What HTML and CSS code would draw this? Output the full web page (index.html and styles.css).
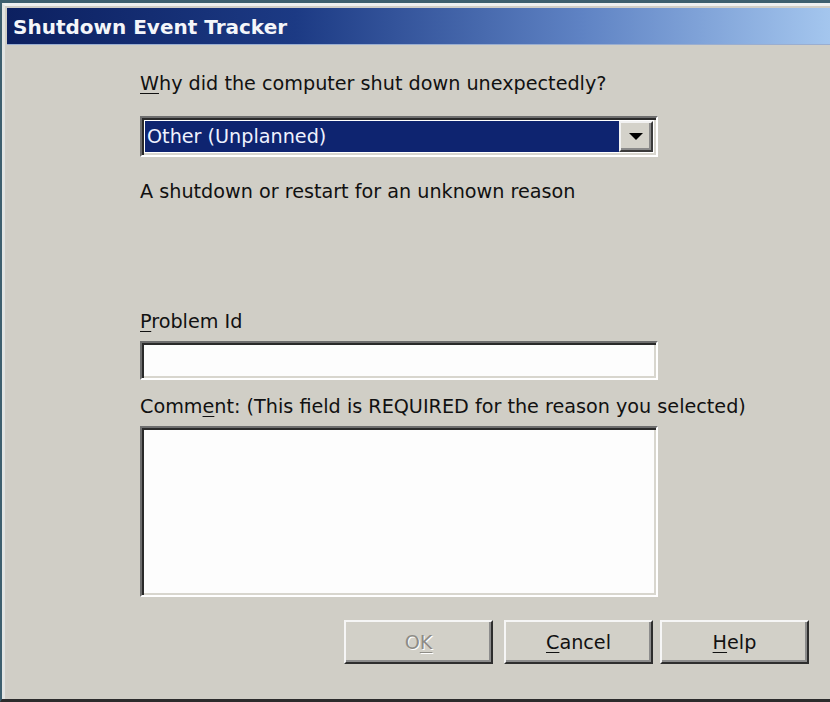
FILE: index.html
```html
<!DOCTYPE html>
<html>
<head>
<meta charset="utf-8">
<title>Shutdown Event Tracker</title>
<link rel="stylesheet" href="styles.css">
</head>
<body>
<div class="window">
  <div class="frame">
    <div class="titlebar"><span class="title">Shutdown Event Tracker</span></div>
    <div class="content">
      <div class="label first"><u>W</u>hy did the computer shut down unexpectedly?</div>
      <div class="combo">
        <div class="combo-field"><span class="combo-sel">Other (Unplanned)</span></div>
        <div class="combo-btn">
          <svg width="14" height="8" viewBox="0 0 14 8"><path d="M0 0H14L7 7Z" fill="#000"/></svg>
        </div>
      </div>
      <div class="label desc">A shutdown or restart for an unknown reason</div>
      <div class="label problem"><u>P</u>roblem Id</div>
      <div class="field input"></div>
      <div class="label comment">Comm<u>e</u>nt: (This field is REQUIRED for the reason you selected)</div>
      <div class="field textarea"></div>
      <div class="buttons">
        <div class="btn disabled"><span>O<u>K</u></span></div>
        <div class="btn cancel"><span><u>C</u>ancel</span></div>
        <div class="btn help"><span><u>H</u>elp</span></div>
      </div>
    </div>
  </div>
</div>
</body>
</html>
```

FILE: styles.css
```css
html, body {
  margin: 0;
  padding: 0;
  height: 100%;
}
body {
  background: #3d5f6e;
  font-family: "DejaVu Sans", "Liberation Sans", sans-serif;
  color: #000;
  overflow: hidden;
}
.window {
  box-sizing: border-box;
  height: 702px;
  width: 830px;
  border-top: 3px solid #3d5f6e;
  border-left: 2px solid #3d5f6e;
  border-bottom: 3px solid #2c2c2c;
}
.frame {
  box-sizing: border-box;
  height: 100%;
  background: #d0cec6;
  border-top: 3px solid #eef0f0;
  border-left: 3px solid #e2e4e2;
  padding-top: 2px;
}
.titlebar {
  margin-left: 2px;
  height: 37px;
  background: linear-gradient(to right, #0c2060 0%, #1c3a84 35%, #5f83c4 70%, #a4c6ee 100%);
  display: flex;
  align-items: center;
  border-bottom: 1px solid #9aaed0;
  box-sizing: border-box;
}
.title {
  color: #f4f6fa;
  font-weight: bold;
  font-size: 20px;
  margin-left: 6px;
  margin-top: 1px;
}
.content {
  padding-left: 135px;
}
.label {
  font-size: 19.2px;
  line-height: 24px;
  height: 24px;
  white-space: nowrap;
  color: #111;
}
.label u {
  text-underline-offset: 3px;
}
.first { margin-top: 27px; }
.combo {
  margin-top: 20px;
  width: 518px;
  height: 41px;
  box-sizing: border-box;
  border-top: 2px solid #6e6e6e;
  border-left: 2px solid #6e6e6e;
  border-bottom: 2px solid #ffffff;
  border-right: 2px solid #ffffff;
  box-shadow: inset 2px 2px 0 #2a2a2a, inset -2px -2px 0 #d8d6ce;
  background: #fff;
  display: flex;
  padding: 3px;
}
.combo-field {
  flex: 1;
  background: #0e2470;
  color: #eef2ff;
  display: flex;
  align-items: center;
  padding-left: 2px;
  font-size: 19.2px;
}
.combo-btn {
  width: 34px;
  box-sizing: border-box;
  background: #d4d2ca;
  border-top: 2px solid #f2f2f2;
  border-left: 2px solid #f2f2f2;
  border-right: 2px solid #3a3a3a;
  border-bottom: 2px solid #3a3a3a;
  box-shadow: inset -2px -2px 0 #8a8a8a;
  display: flex;
  align-items: center;
  justify-content: center;
}
.desc { margin-top: 23px; }
.problem { margin-top: 106px; }
.field {
  width: 518px;
  box-sizing: border-box;
  background: #fdfdfd;
  border-top: 2px solid #6e6e6e;
  border-left: 2px solid #6e6e6e;
  border-bottom: 2px solid #ffffff;
  border-right: 2px solid #ffffff;
  box-shadow: inset 2px 2px 0 #2a2a2a, inset -2px -2px 0 #d8d6ce;
}
.input {
  margin-top: 7px;
  height: 39px;
}
.comment { margin-top: 15px; }
.textarea {
  margin-top: 7px;
  height: 171px;
}
.buttons {
  margin-top: 23px;
  display: flex;
  justify-content: flex-end;
  padding-right: 21px;
}
.btn {
  width: 149px;
  height: 44px;
  box-sizing: border-box;
  background: #d2d0c8;
  border-top: 2px solid #f6f6f6;
  border-left: 2px solid #f6f6f6;
  border-right: 2px solid #2e2e2e;
  border-bottom: 2px solid #2e2e2e;
  box-shadow: inset -2px -2px 0 #8c8c8c;
  display: flex;
  align-items: center;
  justify-content: center;
  font-size: 19.2px;
  color: #111;
}
.btn u { text-underline-offset: 3px; }
.disabled {
  color: #8e8c86;
  text-shadow: 1px 1px 0 #ffffff;
}
.cancel { margin-left: 11px; }
.help { margin-left: 7px; }
```
